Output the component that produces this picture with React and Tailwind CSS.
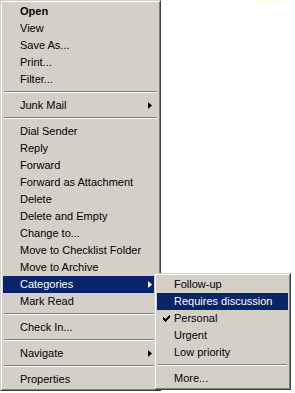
import React from 'react';

const font = { fontFamily: 'Tahoma, "Liberation Sans", Arial, sans-serif' };

const mainItems = [
  { label: 'Open', bold: true },
  { label: 'View' },
  { label: 'Save As...' },
  { label: 'Print...' },
  { label: 'Filter...' },
  { sep: true },
  { label: 'Junk Mail', sub: true },
  { sep: true },
  { label: 'Dial Sender' },
  { label: 'Reply' },
  { label: 'Forward' },
  { label: 'Forward as Attachment' },
  { label: 'Delete' },
  { label: 'Delete and Empty' },
  { label: 'Change to...' },
  { label: 'Move to Checklist Folder' },
  { label: 'Move to Archive' },
  { label: 'Categories', sub: true, active: true },
  { label: 'Mark Read' },
  { sep: true },
  { label: 'Check In...' },
  { sep: true },
  { label: 'Navigate', sub: true },
  { sep: true },
  { label: 'Properties' },
];

const subItems = [
  { label: 'Follow-up' },
  { label: 'Requires discussion', active: true },
  { label: 'Personal', checked: true },
  { label: 'Urgent' },
  { label: 'Low priority' },
  { sep: true },
  { label: 'More...' },
];

function Arrow({ active }) {
  return (
    <svg width="4" height="7" viewBox="0 0 4 7" className="mr-[6px] shrink-0">
      <path d="M0 0 L4 3.5 L0 7 Z" fill={active ? '#ffffff' : '#000000'} />
    </svg>
  );
}

function Check() {
  return (
    <svg width="7" height="7" viewBox="0 0 7 7" className="absolute left-[6px] top-[5px]" shapeRendering="crispEdges">
      <path
        d="M6 0h1v3h-1v1h-1v1h-1v1h-1v1h-1v-1h-1v-1h-1v-3h1v1h1v1h1v-1h1v-1h1z"
        fill="#000000"
      />
    </svg>
  );
}

function Separator() {
  return (
    <div className="h-[9px] flex flex-col pt-[3px] px-[1px]">
      <div className="h-px bg-[#808080]" />
      <div className="h-px bg-white" />
    </div>
  );
}

function Item({ item }) {
  return (
    <div
      className={`relative h-[17px] flex items-center justify-between pl-[17px] text-[11px] leading-[13px] whitespace-nowrap ${
        item.active ? 'bg-[#0a246a] text-white' : 'text-black'
      } ${item.bold ? 'font-bold' : ''}`}
    >
      {item.checked && <Check />}
      <span>{item.label}</span>
      {item.sub && <Arrow active={item.active} />}
    </div>
  );
}

function Menu({ items, className }) {
  return (
    <div
      className={`bg-[#d4d0c8] border border-t-[#d4d0c8] border-l-[#d4d0c8] border-r-[#404040] border-b-[#404040] ${className}`}
    >
      <div className="border border-t-white border-l-white border-r-[#808080] border-b-[#808080] p-px">
        {items.map((item, i) =>
          item.sep ? <Separator key={i} /> : <Item key={i} item={item} />
        )}
      </div>
    </div>
  );
}

export default function App() {
  return (
    <div className="relative w-[295px] h-[393px] bg-white overflow-hidden" style={font}>
      <div className="absolute left-[250px] top-0 w-[30px] h-[2px] bg-[#ffffe8]" />
      <Menu items={mainItems} className="w-[161px]" />
      <Menu items={subItems} className="absolute left-[154px] top-[273px] w-[137px]" />
    </div>
  );
}
